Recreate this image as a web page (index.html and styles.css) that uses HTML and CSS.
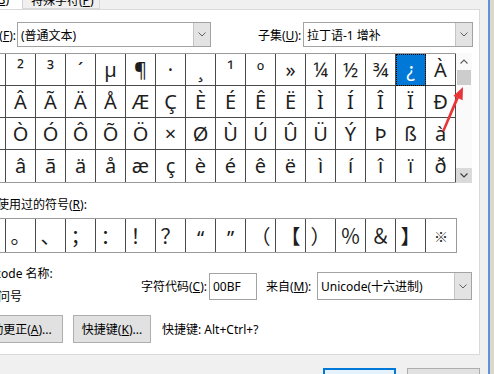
FILE: index.html
```html
<!DOCTYPE html>
<html lang="zh-CN">
<head>
    <meta charset="UTF-8">
    <meta name="viewport" content="width=device-width, initial-scale=1.0">
    <title>符号</title>
    <link rel="stylesheet" href="styles.css">
</head>
<body>

<div class="dialog">
    <div class="tabs">
        <span class="tab active">符号(<u>S</u>)</span>
        <span class="tab">特殊字符(<u>P</u>)</span>
    </div>

    <div class="panel">
        <!-- font / subset -->
        <div class="font-row">
            <label class="font-lbl">字体(<u>F</u>):</label>
            <div class="combo font-combo">
                <span class="combo-text">(普通文本)</span>
                <span class="drop"><svg width="8" height="5" viewBox="0 0 8 5"><polyline points="0.5,0.5 4,4 7.5,0.5" fill="none" stroke="#606060" stroke-width="1"/></svg></span>
            </div>
            <label class="subset-lbl">子集(<u>U</u>):</label>
            <div class="combo subset-combo">
                <span class="combo-text">拉丁语-1 增补</span>
                <span class="drop"><svg width="8" height="5" viewBox="0 0 8 5"><polyline points="0.5,0.5 4,4 7.5,0.5" fill="none" stroke="#606060" stroke-width="1"/></svg></span>
            </div>
        </div>

        <!-- character grid -->
        <div class="chars-row">
            <div class="chars">
                <span>±</span><span>²</span><span>³</span><span>´</span><span>µ</span><span>¶</span><span>·</span><span>¸</span><span>¹</span><span>º</span><span>»</span><span>¼</span><span>½</span><span>¾</span><span class="sel">¿</span><span>À</span>
                <span>Á</span><span>Â</span><span>Ã</span><span>Ä</span><span>Å</span><span>Æ</span><span>Ç</span><span>È</span><span>É</span><span>Ê</span><span>Ë</span><span>Ì</span><span>Í</span><span>Î</span><span>Ï</span><span>Ð</span>
                <span>Ñ</span><span>Ò</span><span>Ó</span><span>Ô</span><span>Õ</span><span>Ö</span><span>×</span><span>Ø</span><span>Ù</span><span>Ú</span><span>Û</span><span>Ü</span><span>Ý</span><span>Þ</span><span>ß</span><span>à</span>
                <span>á</span><span>â</span><span>ã</span><span>ä</span><span>å</span><span>æ</span><span>ç</span><span>è</span><span>é</span><span>ê</span><span>ë</span><span>ì</span><span>í</span><span>î</span><span>ï</span><span>ð</span>
            </div>
            <div class="scrollbar">
                <div class="sb-btn"><svg width="8" height="5" viewBox="0 0 8 5"><polyline points="0.5,4.5 4,1 7.5,4.5" fill="none" stroke="#606060" stroke-width="1.2"/></svg></div>
                <div class="sb-thumb"></div>
                <div class="sb-track"></div>
                <div class="sb-btn sb-down"><svg width="8" height="5" viewBox="0 0 8 5"><polyline points="0.5,0.5 4,4 7.5,0.5" fill="none" stroke="#404040" stroke-width="1.2"/></svg></div>
            </div>
        </div>

        <!-- recently used -->
        <div class="recent-lbl">近期使用过的符号(<u>R</u>):</div>
        <div class="recent">
            <span>，</span><span>。</span><span>、</span><span>；</span><span>：</span><span>！</span><span>？</span><span class="lat">“</span><span class="lat">”</span><span>（</span><span>【</span><span>）</span><span>％</span><span>＆</span><span>】</span><span class="small">※</span>
        </div>

        <!-- name / code -->
        <div class="info-row">
            <div class="names">
                <p>Unicode 名称:</p>
                <p class="uname">倒问号</p>
            </div>
            <div class="code-group">
                <label class="code-lbl">字符代码(<u>C</u>):</label>
                <div class="code-box">00BF</div>
                <label class="from-lbl">来自(<u>M</u>):</label>
                <div class="combo from-combo">
                    <span class="combo-text">Unicode(十六进制)</span>
                    <span class="drop"><svg width="8" height="5" viewBox="0 0 8 5"><polyline points="0.5,0.5 4,4 7.5,0.5" fill="none" stroke="#606060" stroke-width="1"/></svg></span>
                </div>
            </div>
        </div>

        <div class="btn-row">
            <button class="btn btn-auto">自动更正(<u>A</u>)...</button>
            <button class="btn btn-key">快捷键(<u>K</u>)...</button>
            <span class="shortcut">快捷键: Alt+Ctrl+?</span>
        </div>
    </div>

    <div class="footer">
        <button class="btn btn-insert">插入(I)</button>
        <button class="btn btn-cancel">取消</button>
    </div>
</div>
<div class="edge"></div>

<!-- red annotation arrow -->
<svg class="arrow" width="494" height="374" viewBox="0 0 494 374">
    <polygon points="442,131 444.5,131.5 458.8,98.2 456.2,97" fill="#e8353a"/>
    <polygon points="463,87 462.6,100.3 453.3,96" fill="#e8353a"/>
</svg>

</body>
</html>
```

FILE: styles.css
```css
:root {
    --dlg: #f0f0f0;
    --line: #d9d9d9;
    --cell: #4a4a4a;
    --field: #a3a3a3;
    --accent: #0078d7;
}

* { margin: 0; padding: 0; box-sizing: border-box; }

html, body { width: 494px; height: 374px; overflow: hidden; }

body {
    display: flex;
    background: #ddd6cc;
    font: 12px "Noto Sans", "Noto Sans CJK SC", sans-serif;
    color: #000;
}

u { text-decoration: underline; text-underline-offset: 1px; }

.dialog {
    width: 490px;
    height: 374px;
    background: var(--dlg);
    border-right: 2px solid #5f93d6;
    overflow: hidden;
    flex-shrink: 0;
}

.edge { flex: 1; }

/* --- Tabs --- */
.tabs { display: flex; height: 9px; overflow: hidden; margin-left: -60px; }
.tab {
    height: 18px;
    margin-top: -9px;
    line-height: 18px;
    white-space: nowrap;
}
.tab.active { width: 82px; background: #fff; text-align: right; padding-right: 13px; }
.tab:not(.active) {
    width: 78px;
    padding-left: 8px;
    background: #f0f0f0;
    border: 1px solid var(--line);
    border-left-color: #cfcfcf;
}

/* --- Panel --- */
.panel {
    width: 530px;
    height: 346px;
    margin-left: -50px;
    background: #fff;
    border: 1px solid var(--line);
}

.combo {
    display: flex;
    align-items: center;
    height: 25px;
    border: 1px solid var(--field);
    background: #fff;
    white-space: nowrap;
}
.combo-text { flex: 1; padding-left: 3px; overflow: hidden; }
.drop {
    width: 17px;
    height: 100%;
    display: flex;
    align-items: center;
    justify-content: center;
    background: #e3e3e3;
    border-left: 1px solid #c4c4c4;
}

.font-row { display: flex; align-items: center; margin-top: 12px; padding-left: 20px; }
.font-lbl { width: 45px; text-align: right; margin-right: 1px; white-space: nowrap; }
.font-combo { width: 194px; }
.subset-lbl { width: 44px; margin-left: 47px; white-space: nowrap; }
.subset-combo { width: 170px; margin-left: 1px; }

/* --- Character grid --- */
.chars-row { display: flex; margin-top: 6px; margin-left: 24px; }

.chars {
    display: grid;
    grid-template-columns: repeat(16, 30px);
    grid-auto-rows: 32px;
    border-top: 1px solid #9a9a9a;
    border-left: 1px solid var(--cell);
    border-bottom: 1px solid #9a9a9a;
}
.chars span {
    display: flex;
    align-items: center;
    justify-content: center;
    border-right: 1px solid var(--cell);
    border-bottom: 1px solid var(--cell);
    font-size: 20px;
    line-height: 1;
    color: #1e1e1e;
}
.chars span:nth-last-child(-n+16) { border-bottom: none; }
.chars .sel {
    background: var(--accent);
    color: #fff;
    outline: 1px dotted #000;
    outline-offset: -1px;
}

.scrollbar {
    width: 16px;
    display: flex;
    flex-direction: column;
    background: #fafafa;
}
.sb-btn { height: 17px; display: flex; align-items: center; justify-content: center; }
.sb-thumb { height: 15px; background: #cdcdcd; margin: 0 1px; }
.sb-track { flex: 1; }
.sb-down { height: 15px; background: #dadada; }

/* --- Recently used --- */
.recent-lbl { margin-top: 14px; margin-left: 22px; line-height: 16px; white-space: nowrap; }

.recent {
    display: grid;
    grid-template-columns: repeat(16, 30px);
    height: 35px;
    margin-top: 5px;
    margin-left: 24px;
    width: 482px;
    border: 1px solid #9a9a9a;
    border-left-color: var(--cell);
}
.recent span {
    display: flex;
    align-items: center;
    justify-content: center;
    border-right: 1px solid var(--cell);
    font: 20px "Noto Sans CJK SC", sans-serif;
    line-height: 1;
    color: #1e1e1e;
}
.recent .lat { font-family: "Noto Sans", sans-serif; padding-top: 4px; }
.recent .small { font-size: 14px; }
.recent span:last-child { border-right: none; }

/* --- Name / code --- */
.info-row { display: flex; align-items: flex-start; margin-top: 13px; margin-left: 25px; }
.names { width: 161px; line-height: 16px; white-space: nowrap; }
.names .uname { margin-top: 7px; margin-left: 10px; }

.code-group { display: flex; align-items: center; margin-top: 6px; white-space: nowrap; }
.code-lbl { width: 70px; text-align: right; margin-right: 2px; }
.code-box {
    width: 48px;
    height: 27px;
    padding-left: 3px;
    line-height: 25px;
    border: 1px solid var(--field);
}
.from-lbl { width: 48px; margin-left: 9px; }
.from-combo { width: 155px; height: 28px; margin-left: 3px; }

/* --- Buttons --- */
.btn {
    font: 12px "Noto Sans", "Noto Sans CJK SC", sans-serif;
    color: #000;
    background: #e1e1e1;
    border: 1px solid #adadad;
    white-space: nowrap;
}
.btn-row { display: flex; align-items: center; margin-top: 10px; margin-left: 17px; }
.btn-row .btn { height: 28px; }
.btn-auto { width: 95px; }
.btn-key { width: 78px; margin-left: 10px; }
.shortcut { margin-left: 11px; white-space: nowrap; }

.footer { display: flex; padding-top: 13px; padding-left: 323px; gap: 11px; }
.footer .btn { width: 73px; height: 24px; }
.btn-insert { border: 2px solid var(--accent); background: #e5f1fb; }

/* annotation */
.arrow { position: absolute; left: 0; top: 0; pointer-events: none; }
```
